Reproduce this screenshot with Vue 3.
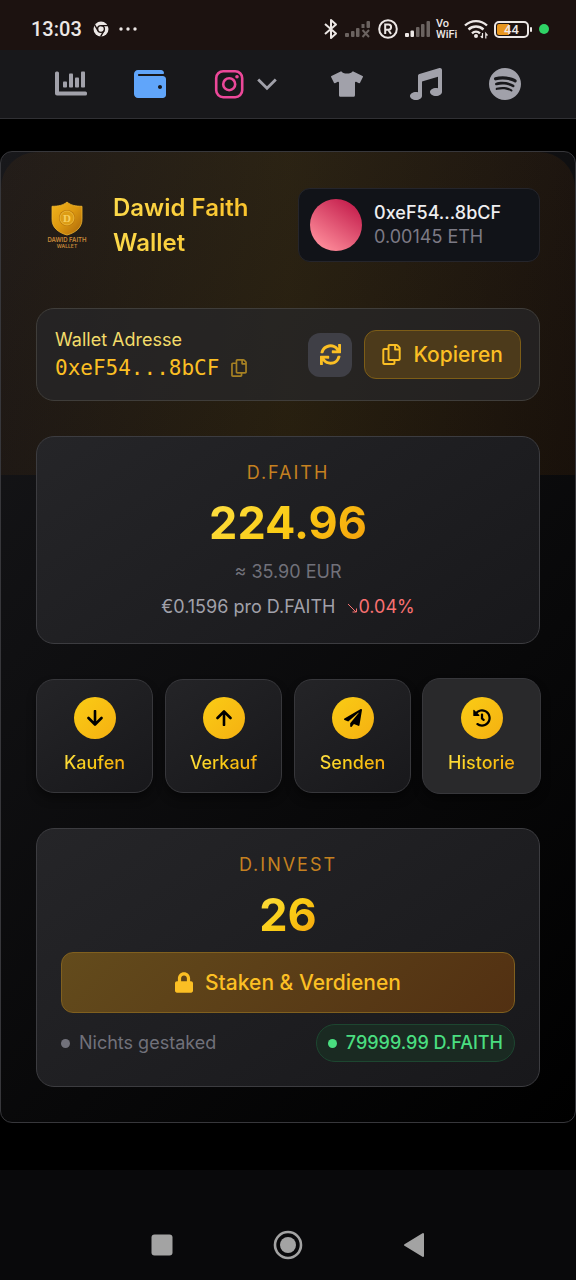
<script setup>
const copyPath = 'M433.941 65.941l-51.882-51.882A48 48 0 0 0 348.118 0H176c-26.51 0-48 21.49-48 48v48H48c-26.51 0-48 21.49-48 48v320c0 26.51 21.49 48 48 48h224c26.51 0 48-21.49 48-48v-48h80c26.51 0 48-21.49 48-48V99.882a48 48 0 0 0-14.059-33.941zM266 464H54a6 6 0 0 1-6-6V150a6 6 0 0 1 6-6h74v224c0 26.51 21.49 48 48 48h96v42a6 6 0 0 1-6 6zm128-96H182a6 6 0 0 1-6-6V54a6 6 0 0 1 6-6h106v88c0 13.255 10.745 24 24 24h88v202a6 6 0 0 1-6 6zm6-256h-64V48h9.632c1.591 0 3.117.632 4.243 1.757l48.368 48.368a6 6 0 0 1 1.757 4.243V112z'

const actions = [
  { label: 'Kaufen', icon: 'down' },
  { label: 'Verkauf', icon: 'up' },
  { label: 'Senden', icon: 'send' },
  { label: 'Historie', icon: 'history', active: true },
]
</script>

<template>
  <div class="screen">
    <header class="status">
      <span class="time">13:03</span>
      <svg class="chrome" width="16" height="16" viewBox="0 0 16 16">
        <circle cx="8" cy="8" r="7.5" fill="#ece7e5" />
        <circle cx="8" cy="8" r="3.4" fill="none" stroke="#1c1210" stroke-width="1.4" />
        <path d="M8 4.6h7M5 9.7L1.6 3.8M11 9.7l-3.4 6" stroke="#1c1210" stroke-width="1.4" />
      </svg>
      <svg width="18" height="4" viewBox="0 0 18 4" fill="#ece7e5">
        <circle cx="2" cy="2" r="1.7" /><circle cx="9" cy="2" r="1.7" /><circle cx="16" cy="2" r="1.7" />
      </svg>
      <div class="status-icons">
        <svg width="14" height="22" viewBox="0 0 14 22" fill="none" stroke="#ece7e5" stroke-width="2" stroke-linejoin="round">
          <path d="M1 6l11 9.5L7 20V2l5 4.500L1 16" />
        </svg>
        <svg width="27" height="18" viewBox="0 0 27 18" fill="#6b6360">
          <rect x="1" y="13" width="4" height="4" rx="1" /><rect x="7" y="11" width="3.500" height="6" rx="1" />
          <rect x="12" y="8" width="3.500" height="9" rx="1" /><rect x="17.500" y="4" width="3" height="4" /><rect x="22.500" y="1" width="3.500" height="7" rx="1" />
          <path d="M18.500 10l6.500 7M25 10l-6.500 7" stroke="#6b6360" stroke-width="2" />
        </svg>
        <svg width="22" height="22" viewBox="0 0 22 22" fill="none" stroke="#ece7e5" stroke-width="2">
          <circle cx="11" cy="11" r="8.800" /><path d="M8.200 16V6.500h3.300a2.500 2.500 0 0 1 0 5.200H8.200M11.300 11.700l2.700 4.300" />
        </svg>
        <svg width="25" height="18" viewBox="0 0 25 18" fill="#6b6360">
          <g fill="#ece7e5"><rect x="0" y="13" width="4" height="4" rx="1" /><rect x="5.500" y="10.500" width="3.500" height="6.500" rx="1" /></g>
          <rect x="11" y="7" width="3.500" height="10" rx="1" /><rect x="16" y="4" width="3.500" height="13" rx="1" /><rect x="21.500" y="1" width="3.500" height="16" rx="1" />
        </svg>
        <span class="vowifi">Vo<br />WiFi</span>
        <svg width="24" height="20" viewBox="0 0 24 20" fill="none" stroke="#ece7e5" stroke-width="2.400">
          <path d="M1 6.500a16 16 0 0 1 22 0M4.500 10.500a11 11 0 0 1 15 0M8 14.300a6 6 0 0 1 8 0" />
          <circle cx="12" cy="17" r="2" fill="#ece7e5" stroke="none" />
          <path d="M18.500 14v5M16.800 17l1.700 2M21.800 19.500v-5l1.700 2" stroke-width="1.200" />
        </svg>
        <span class="battery"><span class="battery-body">44</span><i class="battery-tip"></i></span>
        <i class="rec"></i>
      </div>
    </header>

    <nav class="nav" aria-label="Hauptnavigation">
      <a href="#charts" aria-label="Charts">
        <svg width="32" height="26" viewBox="0 0 32 26" fill="currentColor">
          <path d="M0 2a1.500 1.500 0 0 1 1.500-1.500h1A1.500 1.500 0 0 1 4 2v18.500h26.500A1.500 1.500 0 0 1 32 22v1a1.500 1.500 0 0 1-1.500 1.500H2A2 2 0 0 1 0 22.500z" />
          <rect x="8" y="10.500" width="4" height="6" rx=".8" /><rect x="14" y="2.500" width="4" height="14" rx=".8" />
          <rect x="20" y="6.500" width="4" height="10" rx=".8" /><rect x="26" y=".5" width="4" height="16" rx=".8" />
        </svg>
      </a>
      <a href="#wallet" class="current" aria-label="Wallet">
        <svg width="32" height="32" viewBox="0 0 512 512" fill="currentColor"><path d="M461.2 128H80c-8.840 0-16-7.160-16-16s7.160-16 16-16h384c8.840 0 16-7.160 16-16 0-26.510-21.490-48-48-48H64C28.650 32 0 60.650 0 96v320c0 35.350 28.650 64 64 64h397.200c28.020 0 50.800-21.530 50.800-48V176c0-26.470-22.780-48-50.800-48zM416 336c-17.670 0-32-14.330-32-32s14.330-32 32-32 32 14.330 32 32-14.330 32-32 32z" /></svg>
      </a>
      <button class="social" type="button" aria-label="Instagram">
        <svg class="insta" width="32" height="32" viewBox="0 0 32 32" fill="none" stroke="currentColor" stroke-width="2.600">
          <rect x="3.200" y="3.200" width="26" height="26" rx="7" /><circle cx="16.200" cy="16.200" r="6" />
          <circle cx="24" cy="8.700" r="1.800" fill="currentColor" stroke="none" />
        </svg>
        <svg width="20" height="13" viewBox="0 0 20 13" fill="none" stroke="currentColor" stroke-width="2.800"><path d="M1.200 1.500L10 10.300l8.800-8.800" /></svg>
      </button>
      <a href="#merch" aria-label="Merch">
        <svg width="32" height="26" viewBox="0 0 640 512" fill="currentColor"><path d="M631.2 96.500L436.500 0C416.400 27.800 371.900 47.200 320 47.200S223.600 27.800 203.500 0L8.800 96.500c-7.900 4-11.100 13.600-7.200 21.500l57.200 114.500c4 7.900 13.600 11.100 21.500 7.200l56.600-27.700c10.600-5.200 23 2.500 23 14.400V480c0 17.700 14.300 32 32 32h256c17.700 0 32-14.300 32-32V226.300c0-11.800 12.400-19.600 23-14.400l56.600 27.700c7.900 4 17.500.8 21.500-7.200L638.300 118c4-7.900.8-17.600-7.100-21.500z" /></svg>
      </a>
      <a href="#music" aria-label="Musik">
        <svg width="32" height="32" viewBox="0 0 512 512" fill="currentColor"><path d="M511.990 32.010c0-21.710-21.100-37.010-41.600-30.510L150.400 96c-13.300 4.200-22.400 16.500-22.400 30.500v261.420c-10.050-2.380-20.720-3.920-32-3.920-53.020 0-96 28.650-96 64s42.980 64 96 64 96-28.650 96-64V214.310l256-75.020v184.630c-10.050-2.380-20.720-3.920-32-3.920-53.020 0-96 28.650-96 64s42.980 64 96 64 96-28.650 96-64l-.010-351.990z" /></svg>
      </a>
      <a href="#spotify" aria-label="Spotify">
        <svg width="32" height="32" viewBox="0 8 496 496" fill="currentColor"><path d="M248 8C111.100 8 0 119.100 0 256s111.100 248 248 248 248-111.100 248-248S384.900 8 248 8zm100.700 364.900c-4.200 0-6.800-1.300-10.700-3.600-62.400-37.600-135-39.200-206.700-24.500-3.900 1-9 2.600-11.900 2.600-9.700 0-15.800-7.700-15.800-15.800 0-10.300 6.100-15.200 13.600-16.800 81.900-18.100 165.600-16.500 237 26.200 6.100 3.900 9.700 7.400 9.700 16.500s-7.100 15.400-15.200 15.400zm26.900-65.600c-5.200 0-8.700-2.300-12.300-4.200-62.500-37-155.700-51.900-238.600-29.400-4.800 1.300-7.400 2.600-11.900 2.600-10.700 0-19.400-8.700-19.400-19.400s5.200-17.800 15.500-20.700c27.800-7.800 56.200-13.600 97.800-13.600 64.900 0 127.600 16.100 177 45.500 8.100 4.800 11.300 11 11.300 19.700-.1 10.800-8.500 19.500-19.400 19.500zm31-76.200c-5.200 0-8.400-1.300-12.900-3.900-71.200-42.500-198.500-52.700-280.900-29.700-3.600 1-8.100 2.600-12.900 2.600-13.200 0-23.300-10.300-23.300-23.600 0-13.600 8.400-21.300 17.400-23.900 35.200-10.300 74.600-15.200 117.500-15.200 73 0 149.500 15.200 205.400 47.800 7.800 4.500 12.900 10.700 12.900 22.600 0 13.600-11 23.300-23.200 23.300z" /></svg>
      </a>
    </nav>

    <main class="page">
      <section class="wallet">
        <div class="head">
          <svg class="logo" width="62" height="62" viewBox="0 0 62 62" role="img" aria-label="Dawid Faith Wallet">
            <defs>
              <linearGradient id="shield" x1="0" y1="0" x2="1" y2="1">
                <stop offset="0" stop-color="#f2b41c" /><stop offset=".5" stop-color="#dc9810" /><stop offset="1" stop-color="#a9650a" />
              </linearGradient>
            </defs>
            <path d="M31 8c4 3.500 9 4.300 15 4.300v13C46 33.500 40 38.500 31 41c-9-2.500-15-7.500-15-15.700v-13c6 0 11-.8 15-4.300z" fill="url(#shield)" stroke="#f0b62e" stroke-width=".8" />
            <circle cx="31" cy="24" r="8" fill="#b97509" /><circle cx="31" cy="24" r="7" fill="#dd9d15" stroke="#f6c748" stroke-width=".7" />
            <text x="31" y="28" text-anchor="middle" font-size="11" class="coin">D</text>
            <text x="31" y="48" text-anchor="middle" font-size="6" class="brand">DAWID FAITH</text>
            <text x="31" y="54" text-anchor="middle" font-size="5" class="brand">WALLET</text>
          </svg>
          <h1 class="title"><span class="gold">Dawid Faith Wallet</span></h1>
          <button class="account" type="button">
            <i class="avatar"></i>
            <span class="account-text"><span class="account-name">0xeF54...8bCF</span><span class="account-eth">0.00145 ETH</span></span>
          </button>
        </div>

        <div class="address">
          <div class="address-text">
            <span class="address-label">Wallet Adresse</span>
            <button class="address-value" type="button">
              0xeF54...8bCF
              <svg width="16" height="18" viewBox="0 0 448 512" fill="currentColor"><path :d="copyPath" /></svg>
            </button>
          </div>
          <button class="refresh" type="button" aria-label="Aktualisieren">
            <svg width="21" height="21" viewBox="0 0 512 512" fill="currentColor"><path d="M440.650 12.570l4 82.770A247.160 247.160 0 0 0 255.830 8C134.730 8 33.910 94.920 12.290 209.820A12 12 0 0 0 24.090 224h49.050a12 12 0 0 0 11.670-9.260 175.910 175.910 0 0 1 317-56.940l-101.460-4.860a12 12 0 0 0-12.570 12v47.410a12 12 0 0 0 12 12H500a12 12 0 0 0 12-12V12a12 12 0 0 0-12-12h-47.370a12 12 0 0 0-11.980 12.570zM255.830 432a175.610 175.610 0 0 1-146-77.800l101.800 4.870a12 12 0 0 0 12.570-12v-47.400a12 12 0 0 0-12-12H12a12 12 0 0 0-12 12V500a12 12 0 0 0 12 12h47.350a12 12 0 0 0 12-12.600l-4.150-82.570A247.170 247.170 0 0 0 255.830 504c121.110 0 221.930-86.920 243.550-201.820a12 12 0 0 0-11.800-14.180h-49.050a12 12 0 0 0-11.670 9.260A175.860 175.860 0 0 1 255.830 432z" /></svg>
          </button>
          <button class="copy" type="button">
            <svg width="19" height="21" viewBox="0 0 448 512" fill="currentColor"><path :d="copyPath" /></svg>
            Kopieren
          </button>
        </div>

        <section class="card">
          <h2 class="label">D.FAITH</h2>
          <p class="amount"><span class="gold">224.96</span></p>
          <p class="eur">≈ 35.90 EUR</p>
          <p class="price">
            €0.1596 pro D.FAITH
            <span class="drop"><svg width="11" height="11" viewBox="0 0 11 11" fill="none" stroke="currentColor"><path d="M1 2l8 8M9.500 6.500V10H5.500" /></svg>0.04%</span>
          </p>
        </section>

        <div class="actions">
          <button v-for="a in actions" :key="a.label" type="button" class="action" :class="{ active: a.active }">
            <span class="disc">
              <svg v-if="a.icon === 'down'" width="16" height="16" viewBox="0 0 16 16" class="arrow"><path d="M8 1v13M1.500 8L8 14.500 14.500 8" /></svg>
              <svg v-else-if="a.icon === 'up'" width="16" height="16" viewBox="0 0 16 16" class="arrow"><path d="M8 15V2M1.500 8L8 1.500 14.500 8" /></svg>
              <svg v-else-if="a.icon === 'send'" width="18" height="18" viewBox="0 0 512 512"><path d="M476 3.200L12.500 270.600c-18.100 10.400-15.800 35.600 2.200 43.200L121 358.400l287.300-253.200c5.500-4.900 13.300 2.600 8.600 8.300L176 407v80.500c0 23.600 28.500 32.900 42.500 15.800L282 426l124.600 52.200c14.200 6 30.400-2.900 33-18.200l72-432C515 7.800 493.300-6.800 476 3.200z" /></svg>
              <svg v-else width="18" height="18" viewBox="0 0 512 512"><path d="M504 255.531c.253 136.640-111.180 248.372-247.820 248.468-59.015.042-113.223-20.530-155.822-54.911-11.077-8.940-11.905-25.541-1.839-35.607l11.267-11.267c8.609-8.609 22.353-9.551 31.891-1.984C173.062 425.135 212.781 440 256 440c101.705 0 184-82.311 184-184 0-101.705-82.311-184-184-184-48.814 0-93.149 18.969-126.068 49.932l50.754 50.754c10.080 10.080 2.941 27.314-11.313 27.314H24c-8.837 0-16-7.163-16-16V38.627c0-14.254 17.234-21.393 27.314-11.314l49.372 49.372C129.209 34.136 189.552 8 256 8c136.810 0 247.747 110.780 248 247.531zm-180.912 78.784l9.823-12.630c8.138-10.463 6.253-25.542-4.210-33.679L288 256.349V152c0-13.255-10.745-24-24-24h-16c-13.255 0-24 10.745-24 24v135.651l65.409 50.874c10.463 8.137 25.541 6.253 33.679-4.210z" /></svg>
            </span>
            <span class="gold">{{ a.label }}</span>
          </button>
        </div>

        <section class="card invest">
          <h2 class="label">D.INVEST</h2>
          <p class="amount"><span class="gold">26</span></p>
          <button class="stake" type="button">
            <svg width="18" height="21" viewBox="0 0 448 512" fill="currentColor"><path d="M400 224h-24v-72C376 68.200 307.800 0 224 0S72 68.200 72 152v72H48c-26.500 0-48 21.500-48 48v192c0 26.500 21.500 48 48 48h352c26.500 0 48-21.500 48-48V272c0-26.500-21.500-48-48-48zm-104 0H152v-72c0-39.700 32.300-72 72-72s72 32.300 72 72v72z" /></svg>
            Staken &amp; Verdienen
          </button>
          <div class="stake-row">
            <span class="none"><i class="dot"></i>Nichts gestaked</span>
            <span class="pool"><i class="dot"></i>79999.99 D.FAITH</span>
          </div>
        </section>
      </section>
    </main>

    <footer class="system">
      <button type="button" aria-label="Übersicht"><svg width="22" height="22" viewBox="0 0 22 22" fill="currentColor"><rect x=".5" y=".5" width="21" height="21" rx="3" /></svg></button>
      <button type="button" aria-label="Startseite"><svg width="30" height="30" viewBox="0 0 30 30" fill="currentColor"><circle cx="15" cy="15" r="13" fill="none" stroke="currentColor" stroke-width="2.600" /><circle cx="15" cy="15" r="8" /></svg></button>
      <button type="button" aria-label="Zurück"><svg width="22" height="26" viewBox="0 0 22 26" fill="currentColor" stroke="currentColor" stroke-width="2" stroke-linejoin="round"><path d="M2 13L20 2v22z" /></svg></button>
    </footer>
  </div>
</template>

<style>
body {
  margin: 0;
  background: #000;
}
</style>

<style scoped>
.screen {
  min-height: 100vh;
  display: flex;
  flex-direction: column;
  background: #000;
  font-family: Inter, sans-serif;
  font-size: 18px;
  line-height: 24px;
  color: #fff;
}
.screen *, .screen *::before {
  box-sizing: border-box;
}
svg {
  display: block;
  flex: none;
}
h1, h2, p {
  margin: 0;
  font-weight: 400;
}
button {
  margin: 0;
  padding: 0;
  border: 0;
  background: none;
  color: inherit;
  font: inherit;
  cursor: pointer;
}
.status {
  display: flex;
  align-items: center;
  height: 50px;
  padding: 8px 27px 0 31px;
  background: #1c1210;
  color: #ece7e5;
}
.time {
  font: 500 20px/24px Roboto, sans-serif;
}
.chrome {
  margin: 0 10px 0 11px;
}
.status-icons {
  margin-left: auto;
  display: flex;
  align-items: center;
  gap: 6px;
}
.vowifi {
  width: 22px;
  font: 500 11px/11px Roboto, sans-serif;
  white-space: nowrap;
}
.battery {
  display: flex;
  align-items: center;
  gap: 1px;
  width: 39px;
}
.battery-body {
  width: 35px;
  height: 17px;
  border: 2px solid #ece7e5;
  border-radius: 5px;
  background: linear-gradient(90deg, #e8961e 40%, #1c1210 40%) content-box;
  padding: 1px;
  font: 500 13px/11px Roboto, sans-serif;
  text-align: center;
}
.battery-tip {
  width: 2px;
  height: 5px;
  border-radius: 1px;
  background: #ece7e5;
}
.rec {
  width: 10px;
  height: 10px;
  border-radius: 50%;
  background: #2fd366;
}
.nav {
  display: flex;
  align-items: center;
  justify-content: space-between;
  height: 69px;
  padding: 0 55px;
  background: #18181b;
  border-bottom: 1px solid #303034;
}
.nav a, .social {
  color: #a1a1aa;
}
.nav .current {
  color: #60a5fa;
}
.social {
  display: flex;
  align-items: center;
  gap: 12px;
  padding-right: 7px;
}
.insta {
  color: #ec4899;
}
.page {
  flex: 1;
  padding: 32px 0 47px;
}
.wallet {
  position: relative;
  border: 1px solid #37373b;
  border-radius: 12px;
  padding: 36px 35px 35px;
  background: linear-gradient(135deg, #18181b, #000);
  display: flex;
  flex-direction: column;
  gap: 35px;
}
.wallet::before {
  content: "";
  position: absolute;
  inset: 0 0 auto;
  height: calc(100% / 3);
  border-radius: 36px 36px 0 0;
  background: linear-gradient(90deg, rgba(130, 70, 10, .1), rgba(202, 138, 4, .13), rgba(130, 65, 5, .12));
}
.wallet > * {
  position: relative;
}
.head {
  display: flex;
  align-items: center;
  gap: 15px;
  margin-bottom: 11px;
}
.logo {
  flex: none;
}
.coin {
  font-family: "Liberation Serif", serif;
  font-weight: 700;
  fill: #f8d060;
}
.brand {
  font-family: Inter, sans-serif;
  font-weight: 600;
  fill: #c98a3a;
}
.title {
  flex: 1;
  font-size: 24px;
  line-height: 35px;
  font-weight: 600;
}
.gold {
  display: inline-block;
  color: transparent;
  background: linear-gradient(135deg, #fde047, #facc15 50%, #f59e0b);
  background-clip: text;
  -webkit-background-clip: text;
}
.title .gold {
  background-image: linear-gradient(90deg, #fcd94a, #f9be25);
}
.account {
  display: flex;
  align-items: center;
  gap: 12px;
  width: 48%;
  height: 74px;
  padding: 0 11px 1px;
  border: 1px solid #25252b;
  border-radius: 12px;
  background: #111318;
  text-align: left;
}
.avatar {
  flex: none;
  width: 52px;
  height: 52px;
  border-radius: 50%;
  background: linear-gradient(215deg, #c41d4c 10%, #ff8f9c 90%);
}
.account-text {
  display: flex;
  flex-direction: column;
}
.account-name {
  font-weight: 500;
  color: #eeeef0;
}
.account-eth {
  color: #7c7a85;
}
.address {
  display: flex;
  align-items: center;
  gap: 12px;
  height: 93px;
  padding: 0 18px;
  border: 1px solid #3f3d3a;
  border-radius: 18px;
  background: rgba(39, 39, 42, .72);
}
.address-text {
  flex: 1;
  display: flex;
  flex-direction: column;
  align-items: flex-start;
  gap: 3px;
  padding-bottom: 1px;
}
.address-label {
  color: #f3dc6a;
}
.address-value {
  display: flex;
  align-items: center;
  gap: 12px;
  font: 21px/26px "DejaVu Sans Mono", monospace;
  color: #fbbf24;
}
.address-value svg {
  opacity: .6;
}
.refresh {
  display: grid;
  place-items: center;
  width: 44px;
  height: 44px;
  border-radius: 12px;
  background: #3f3f46;
  color: #fbbf24;
}
.copy {
  display: flex;
  align-items: center;
  gap: 12px;
  height: 49px;
  padding: 0 17px;
  border: 1px solid #7d5d17;
  border-radius: 12px;
  background: #4c3a1b;
  color: #fbbf24;
  font-size: 21px;
  font-weight: 500;
}
.card {
  padding: 24px;
  border: 1px solid #3c3c40;
  border-radius: 18px;
  background: linear-gradient(145deg, #252528, #18181b);
  text-align: center;
}
.label {
  font-size: 18px;
  letter-spacing: 2px;
  color: #c58120;
}
.amount {
  margin-top: 11px;
  font-size: 45px;
  line-height: 53px;
  font-weight: 700;
}
.eur {
  margin-top: 11px;
  color: #71717a;
}
.price {
  display: flex;
  justify-content: center;
  gap: 12px;
  margin-top: 11px;
  color: #a1a1aa;
}
.drop {
  display: flex;
  align-items: center;
  color: #f87171;
}
.actions {
  display: grid;
  grid-template-columns: repeat(4, 1fr);
  gap: 12px;
}
.action {
  display: flex;
  flex-direction: column;
  align-items: center;
  gap: 12px;
  padding: 17px 0;
  border: 1px solid #37373b;
  border-radius: 18px;
  background: linear-gradient(145deg, #242427, #18181b);
  box-shadow: 0 6px 10px rgba(0, 0, 0, .4);
  font-weight: 500;
}
.action.active {
  margin: -1px;
  padding: 18px 0;
  background: #29292b;
}
.disc {
  display: grid;
  place-items: center;
  width: 42px;
  height: 42px;
  border-radius: 50%;
  background: linear-gradient(135deg, #facc15, #f5b011);
}
.arrow {
  fill: none;
  stroke: #000;
  stroke-width: 2.6px;
  stroke-linecap: round;
  stroke-linejoin: round;
}
.stake {
  display: flex;
  align-items: center;
  justify-content: center;
  gap: 12px;
  width: 100%;
  height: 61px;
  margin: 11px 0;
  border: 1px solid #80601f;
  border-radius: 12px;
  background: linear-gradient(135deg, #634b1c, #523012);
  color: #fbbf24;
  font-size: 21px;
  font-weight: 500;
}
.stake-row {
  display: flex;
  align-items: center;
  justify-content: space-between;
}
.none, .pool {
  display: flex;
  align-items: center;
  gap: 9px;
}
.none {
  color: #71717a;
}
.pool {
  height: 38px;
  padding: 0 11px;
  border: 1px solid #1d4630;
  border-radius: 19px;
  background: #1a2a22;
  color: #4ade80;
  font-weight: 500;
}
.dot {
  width: 9px;
  height: 9px;
  border-radius: 50%;
  background: currentColor;
}
.system {
  display: grid;
  grid-template-columns: repeat(3, 126px);
  justify-content: center;
  justify-items: center;
  align-items: center;
  height: 110px;
  padding-top: 40px;
  background: #09090b;
  color: #a3a3a3;
}
</style>
